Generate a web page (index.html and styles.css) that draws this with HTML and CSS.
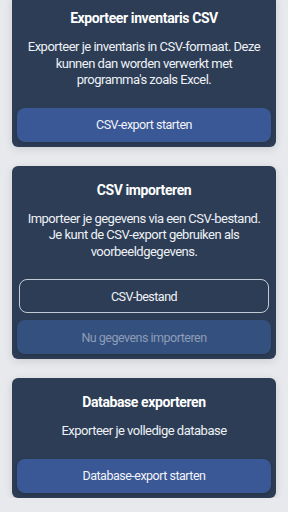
FILE: index.html
```html
<!DOCTYPE html>
<html>

<head>
	<link rel="stylesheet" href="styles.css">
</head>

<body>
	<div class="page">
		<div class="card">
			<h2>Exporteer inventaris CSV</h2>
			<p>Exporteer je inventaris in CSV-formaat. Deze kunnen dan worden verwerkt met programma's zoals Excel.</p>
			<button class="btn">CSV-export starten</button>
		</div>

		<div class="card">
			<h2>CSV importeren</h2>
			<p>Importeer je gegevens via een CSV-bestand. Je kunt de CSV-export gebruiken als voorbeeldgegevens.</p>
			<button class="btn btn-outline">CSV-bestand</button>
			<button class="btn" disabled>Nu gegevens importeren</button>
		</div>

		<div class="card">
			<h2>Database exporteren</h2>
			<p>Exporteer je volledige database</p>
			<button class="btn">Database-export starten</button>
		</div>
	</div>
</body>

</html>
```

FILE: styles.css
```css
* {
	box-sizing: border-box;
	margin: 0;
	padding: 0;
	font-family: Roboto, 'Noto Sans', sans-serif;
}

body {
	background: #e8e9ed;
	overflow: hidden;
}

.page {
	display: flex;
	flex-direction: column;
	gap: 19px;
	padding: 0 12px;
	margin-top: -6px;
}

.card {
	background: #2c3d55;
	border-radius: 6px;
	padding: 16px 5px 5px;
	display: flex;
	flex-direction: column;
	box-shadow: 0 2px 8px rgba(0, 0, 0, 0.12);
	color: #fff;
	text-align: center;
}

.card h2 {
	font-size: 14px;
	font-weight: 700;
	letter-spacing: -0.4px;
	line-height: 17px;
	margin-bottom: 12px;
}

.card p {
	font-size: 13px;
	letter-spacing: -0.5px;
	line-height: 16.5px;
	color: #eef1f5;
	padding: 0 10px;
	margin-bottom: 19px;
}

.btn {
	height: 34px;
	border: none;
	border-radius: 8px;
	background: #3a5796;
	color: #f2f4f8;
	font-size: 12.5px;
	letter-spacing: -0.5px;
	box-shadow: 0 2px 4px rgba(0, 0, 0, 0.15);
}

.btn-outline {
	background: transparent;
	border: 1px solid #c3cad6;
	margin: 0 2px 7px;
	box-shadow: none;
}

.btn:disabled {
	background: #34507f;
	color: #8e9db8;
}
```
